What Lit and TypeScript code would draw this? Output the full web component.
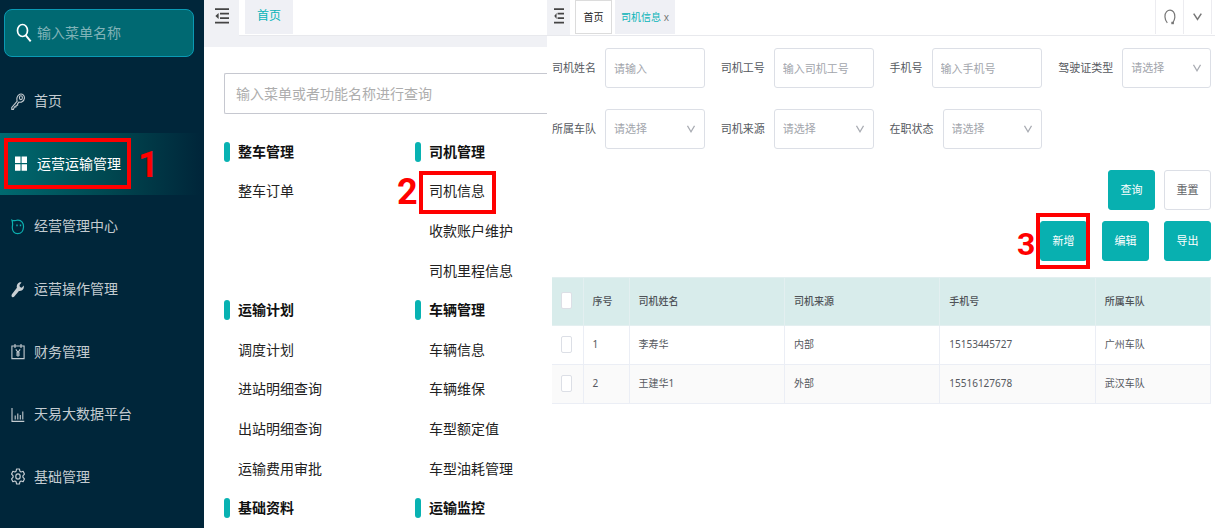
import { LitElement, html, css, svg, nothing } from "lit";
import { customElement } from "lit/decorators.js";
import { classMap } from "lit/directives/class-map.js";

const FONT = css`"Noto Sans", "Noto Sans CJK SC", sans-serif`;

const base = css`
  *, *::before, *::after { box-sizing: border-box; }
  button, input, select { font: inherit; margin: 0; }
  a { color: inherit; text-decoration: none; }
  ul { list-style: none; margin: 0; padding: 0; }
  svg { display: block; flex: none; }
  .marked { position: relative; }
  .mark {
    position: absolute;
    border: 4px solid #ff0000;
    pointer-events: none;
  }
  .step {
    position: absolute;
    color: #ff0000;
    font: 700 36px/36px Roboto, sans-serif;
    pointer-events: none;
  }
`;

const foldIcon = (w: number) => html`<svg width=${w} height="16" viewBox="0 0 14 16" preserveAspectRatio="none" aria-hidden="true">
  <path d="M0 1.2h14M5 5.7h9M5 10.2h9M0 14.7h14" stroke="#444" stroke-width="1.700" fill="none"/>
  <path d="M3.6 5v6L.4 8z" fill="#444"/>
</svg>`;

const chevron = html`<svg class="chevron" width="8" height="8" viewBox="0 0 8 8" aria-hidden="true">
  <path d="M.5 .8L4 6.8L7.5 .8" fill="none" stroke="#a8abb2" stroke-width="1.200"/>
</svg>`;

const icons: Record<string, unknown> = {
  key: svg`<g fill="none" stroke="#c3cbd0" stroke-width="1.1"><path d="M6.2 8.2C5.3 5.600 6.200 2.300 8.800 1.300C11.300 .400 13.800 2.500 13.400 5.400C13 8.100 10.400 9.900 7.900 9.100L6.600 10.800V12.300H5.200L4.900 13.900H3.500L2.400 16.400H.8V14.500Z"/><ellipse cx="9.900" cy="4.700" rx="1.500" ry="1.900"/></g>`,
  grid: svg`<path fill="#fff" d="M1 1.500h5.500v6.500H1zM7.600 1.500H13v6.500H7.600zM1 9.200h5.500v6.500H1zM7.600 9.200H13v6.500H7.600z"/>`,
  cat: svg`<path d="M1 2.200C2.700 3.200 4 2.500 6.500 2.200C10.600 1.900 12.800 5.200 12.500 9.200C12.200 13.300 9.700 15.600 6.600 15.600C3.200 15.600 1.200 13 1.300 9.500C1.400 7 2.200 5.800 1 2.200Z" fill="none" stroke="#0cb0b0" stroke-width="1.200"/><path d="M6 6.500v1.800M9.500 6.500v1.800" stroke="#0cb0b0" stroke-width="1.400"/>`,
  wrench: svg`<path fill="#c9d0d4" d="M12.700 4.600L10.700 6.700L8.900 5.900L8.500 3.900L10.500 1.400C7.600 .600 5.200 3.400 5.900 6.800L.9 13.200C.2 14.400.4 15.900 1.500 16.300C2.200 16.500 2.800 16.300 3.300 15.600L7.900 9.900C11.300 10.400 13.500 7.800 12.700 4.600Z"/>`,
  yen: svg`<g fill="none" stroke="#c3cbd0" stroke-width="1.100"><path d="M.9 3h12.200v12.600H.9zM4 1v4M10 1v4M4.800 6.300L7 9.300L9.200 6.300M7 9.300v4.400M5 10h4M5 12h4"/></g>`,
  chart: svg`<path d="M1 2v13.400h12.300M4.200 9.500v4M6.800 7.500v6M9.300 9v4.500M11.800 5.500v8" fill="none" stroke="#c3cbd0" stroke-width="1.100"/>`,
  gear: svg`<g fill="none" stroke="#c3cbd0" stroke-width="1.200" stroke-linejoin="round"><path d="M5.600 1h2.800l.5 2.200l1.200.8l2-.7l1.300 2.800l-1.500 1.700v1.400l1.500 1.700l-1.300 2.800l-2-.7l-1.200.8l-.5 2.200H5.600l-.5-2.200l-1.200-.8l-2 .7L.6 10.900l1.500-1.700V7.800L.6 6.100l1.300-2.800l2 .7l1.200-.8z"/><ellipse cx="7" cy="8.500" rx="2.200" ry="2.600"/></g>`,
};

interface NavEntry { icon: string; label: string; active?: boolean }

@customElement("side-nav")
class SideNav extends LitElement {
  static styles = [base, css`
    :host {
      display: flex;
      flex-direction: column;
      background: #00263a;
      color: #c3cbd0;
      padding: 9px 0 20px;
      font: 14px/20px ${FONT};
    }
    .search {
      display: flex;
      align-items: center;
      gap: 5px;
      height: 48px;
      margin: 0 10px 13px 4px;
      padding: 0 11px;
      background: #006972;
      border: 1px solid #0a9ab4;
      border-radius: 8px;
    }
    .search input {
      flex: 1;
      min-width: 0;
      border: 0;
      padding: 0;
      background: transparent;
      color: #fff;
      outline: 0;
    }
    .search input::placeholder { color: #80b3b8; opacity: 1; }
    nav { flex: 1; display: flex; }
    ul { flex: 1; display: flex; flex-direction: column; }
    li { flex: 1 0 0; display: flex; }
    .item { flex: 1; display: flex; align-items: center; gap: 9px; padding-left: 11px; }
    .item.active {
      color: #fff;
      padding-left: 14px;
      background: linear-gradient(90deg, #006a70 0%, #00464f 55%, #00263a 98%);
    }
    .mark { left: 4px; top: 5px; width: 127px; height: 51px; }
    .step { left: 138px; top: 14px; }
  `];

  private entries: NavEntry[] = [
    { icon: "key", label: "首页" },
    { icon: "grid", label: "运营运输管理", active: true },
    { icon: "cat", label: "经营管理中心" },
    { icon: "wrench", label: "运营操作管理" },
    { icon: "yen", label: "财务管理" },
    { icon: "chart", label: "天易大数据平台" },
    { icon: "gear", label: "基础管理" },
  ];

  render() {
    return html`
      <label class="search">
        <svg width="16" height="20" viewBox="0 0 16 20" aria-hidden="true">
          <ellipse cx="6.500" cy="7.500" rx="5" ry="6" fill="none" stroke="#fff" stroke-width="1.700"/>
          <path d="M9.800 12.300L14.700 18.300" stroke="#fff" stroke-width="1.900"/>
        </svg>
        <input type="text" placeholder="输入菜单名称" aria-label="输入菜单名称">
      </label>
      <nav><ul>
        ${this.entries.map((e) => html`<li class="marked">
          <a href="#" class=${classMap({ item: true, active: !!e.active })}>
            <svg width="14" height="17" viewBox="0 0 14 17" aria-hidden="true">${icons[e.icon]}</svg>
            <span>${e.label}</span>
          </a>
          ${e.active ? html`<span class="mark"></span><span class="step">1</span>` : nothing}
        </li>`)}
      </ul></nav>`;
  }
}

interface MenuGroup { title: string; links: string[]; rows: number }

@customElement("menu-panel")
class MenuPanel extends LitElement {
  static styles = [base, css`
    :host {
      display: flex;
      flex-direction: column;
      min-width: 0;
      background: #fff;
      color: #222;
      font: 14px/20px ${FONT};
    }
    .bar { display: flex; height: 47px; background: #f0f1f5; }
    .fold { width: 35px; height: 31px; border: 0; padding: 0; background: none; display: grid; place-items: center; }
    .tabs { flex: 1; height: 36px; padding-left: 6px; background: #fff; border-bottom: 1px solid #e8e9ed; }
    .tab {
      display: block;
      width: 48px;
      height: 34px;
      font-size: 12px;
      line-height: 32px;
      text-align: center;
      color: #08b4b8;
      background: #eff0f5;
    }
    .query {
      display: block;
      height: 41px;
      margin: 26px 0 18px 20px;
      padding: 0 11px;
      border: 1px solid #c6c8d0;
      border-right: 0;
      border-radius: 2px 0 0 2px;
      outline: 0;
    }
    .query::placeholder { color: #adadad; opacity: 1; }
    .columns { flex: 1; display: grid; grid-template-columns: 191px 1fr; padding-left: 20px; }
    .column, .group { display: flex; flex-direction: column; }
    .row { display: flex; align-items: center; margin: 0; font: inherit; padding-left: 14px; }
    .title { font-weight: 700; color: #111; padding: 0; gap: 8px; }
    .title::before { content: ""; width: 6px; height: 20px; border-radius: 3px; background: #08b2b2; }
    .mark { left: 4px; top: -1px; width: 77px; height: 43px; }
    .step { left: -18px; top: 2px; }
  `];

  private columns: MenuGroup[][] = [
    [
      { title: "整车管理", links: ["整车订单"], rows: 4 },
      { title: "运输计划", links: ["调度计划", "进站明细查询", "出站明细查询", "运输费用审批"], rows: 5 },
      { title: "基础资料", links: [], rows: 1 },
    ],
    [
      { title: "司机管理", links: ["司机信息", "收款账户维护", "司机里程信息"], rows: 4 },
      { title: "车辆管理", links: ["车辆信息", "车辆维保", "车型额定值", "车型油耗管理"], rows: 5 },
      { title: "运输监控", links: [], rows: 1 },
    ],
  ];

  private group(g: MenuGroup) {
    const share = `height:${100 / g.rows}%`;
    return html`<section class="group" style=${`height:${g.rows * 10}%`}>
      <h2 class="row title" style=${share}>${g.title}</h2>
      ${g.links.map((l) => html`<div class="row marked" style=${share}>
        <a href="#">${l}</a>
        ${l === "司机信息" ? html`<span class="mark"></span><span class="step">2</span>` : nothing}
      </div>`)}
    </section>`;
  }

  render() {
    return html`
      <header class="bar">
        <button class="fold" aria-label="折叠菜单">${foldIcon(14)}</button>
        <div class="tabs"><a class="tab" href="#">首页</a></div>
      </header>
      <input class="query" type="text" aria-label="菜单查询" placeholder="输入菜单或者功能名称进行查询">
      <div class="columns">
        ${this.columns.map((c) => html`<div class="column">${c.map((g) => this.group(g))}</div>`)}
      </div>`;
  }
}

interface Field { id: string; label: string; hint: string; select?: boolean }

@customElement("driver-page")
class DriverPage extends LitElement {
  static styles = [base, css`
    :host { display: block; min-width: 0; background: #fff; color: #55585e; font: 11px/16px ${FONT}; }
    .bar { display: flex; height: 36px; border-bottom: 1px solid #e8e9ed; }
    .fold { width: 23px; border: 0; padding: 0 0 4px; background: #f0f1f5; display: grid; place-items: center; }
    .tabs { flex: 1; display: flex; gap: 3px; padding-left: 5px; font-size: 10px; line-height: 32px; }
    .tab { height: 34px; text-align: center; width: 37px; color: #222; border: 1px solid #dcdcdc; }
    .tab.current { width: 60px; color: #08b4b8; background: #eff0f5; border-color: #eff0f5; }
    .close { color: #777; }
    .tool {
      width: 28px; height: 34px; padding: 0; border: 0; border-left: 1px solid #ececf0; background: none;
      display: grid; place-items: center;
    }
    .tool:last-child { width: 29px; margin-right: 3px; border-right: 1px solid #ececf0; }
    .body { padding: 12px 4px 0 5px; }
    .form { display: grid; grid-template-columns: repeat(4, 1fr); gap: 21px 16px; }
    .field { display: flex; align-items: center; gap: 9px; }
    .field label { flex: none; }
    .box { flex: 1; min-width: 0; display: grid; align-items: center; }
    .control {
      grid-area: 1 / 1;
      width: 100%;
      height: 40px;
      padding: 0 8px;
      border: 1px solid #dcdfe6;
      border-radius: 3px;
      background: #fff;
      color: #a2a5ac;
      appearance: none;
      outline: 0;
    }
    .control::placeholder { color: #a2a5ac; opacity: 1; }
    .chevron { grid-area: 1 / 1; justify-self: end; margin-right: 10px; pointer-events: none; }
    .actions { display: flex; justify-content: flex-end; gap: 9px; margin-top: 21px; }
    .actions.wide { gap: 15px; margin: 11px 0 16px; }
    .btn {
      width: 47px; height: 40px; padding: 0; display: block;
      color: #fff; background: #08b0b0; border: 1px solid #08b0b0; border-radius: 3px;
    }
    .btn.plain { color: #606266; background: #fff; border-color: #dcdfe6; }
    .mark { left: -4px; top: -8px; width: 54px; height: 56px; }
    .step { left: -23px; top: 5px; font-size: 32px; }
    table { width: 100%; border-collapse: collapse; table-layout: fixed; font-size: 10px; }
    th, td {
      height: 39px; padding: 0 0 2px 9px; text-align: left;
      border: 1px solid #ebeef5;
    }
    th { height: 48px; background: #d8eceb; font-weight: 500; color: #4f5358; border-color: #e3eff0; }
    td:first-child, th:first-child { border-left: 0; }
    tbody tr:nth-child(even) { background: #fafafa; }
    .pick { width: 31px; }
    .no { width: 46px; }
    .wide-col { width: 23.6%; }
    .check {
      display: block; width: 11px; height: 17px; appearance: none;
      background: #fff; border: 1px solid #dcdfe6; border-radius: 2px;
    }
  `];

  private fields: Field[] = [
    { id: "name", label: "司机姓名", hint: "请输入" },
    { id: "code", label: "司机工号", hint: "输入司机工号" },
    { id: "phone", label: "手机号", hint: "输入手机号" },
    { id: "licence", label: "驾驶证类型", hint: "请选择", select: true },
    { id: "fleet", label: "所属车队", hint: "请选择", select: true },
    { id: "source", label: "司机来源", hint: "请选择", select: true },
    { id: "status", label: "在职状态", hint: "请选择", select: true },
  ];

  private rows = [
    ["1", "李寿华", "内部", "15153445727", "广州车队"],
    ["2", "王建华1", "外部", "15516127678", "武汉车队"],
  ];

  private field(f: Field) {
    return html`<div class="field">
      <label for=${f.id}>${f.label}</label>
      <div class="box">
        ${f.select
          ? html`<select class="control" id=${f.id}><option>${f.hint}</option></select>${chevron}`
          : html`<input class="control" type="text" id=${f.id} placeholder=${f.hint}>`}
      </div>
    </div>`;
  }

  render() {
    return html`
      <header class="bar">
        <button class="fold" aria-label="折叠菜单">${foldIcon(10)}</button>
        <div class="tabs">
          <a class="tab" href="#">首页</a>
          <a class="tab current" href="#">司机信息 <span class="close">x</span></a>
        </div>
        <button class="tool" aria-label="刷新">
          <svg width="12" height="16" viewBox="0 0 12 16" aria-hidden="true">
            <path d="M3.300 13.800C.3 10.500.3 5 2.600 2.700C4.700.6 7.600.7 9.500 2.900C11.600 5.600 11.300 10.600 8.700 13.800" fill="none" stroke="#777" stroke-width="1.200"/>
            <path d="M7.300 12.800h2.600v2.400H7.300z" fill="#777"/>
          </svg>
        </button>
        <button class="tool" aria-label="更多">
          <svg width="9" height="8" viewBox="0 0 9 8" aria-hidden="true">
            <path d="M.7 .7L4.500 6.500L8.300 .7" fill="none" stroke="#777" stroke-width="1.500"/>
          </svg>
        </button>
      </header>
      <div class="body">
        <form class="form">${this.fields.map((f) => this.field(f))}</form>
        <div class="actions">
          <button class="btn">查询</button>
          <button class="btn plain">重置</button>
        </div>
        <div class="actions wide">
          <div class="marked">
            <button class="btn">新增</button>
            <span class="mark"></span><span class="step">3</span>
          </div>
          <button class="btn">编辑</button>
          <button class="btn">导出</button>
        </div>
        <table>
          <thead><tr>
            <th class="pick"><input class="check" type="checkbox" aria-label="全选"></th>
            <th class="no">序号</th>
            <th class="wide-col">司机姓名</th>
            <th class="wide-col">司机来源</th>
            <th class="wide-col">手机号</th>
            <th>所属车队</th>
          </tr></thead>
          <tbody>
            ${this.rows.map((r) => html`<tr>
              <td><input class="check" type="checkbox" aria-label=${r[1]}></td>
              ${r.map((c) => html`<td>${c}</td>`)}
            </tr>`)}
          </tbody>
        </table>
      </div>`;
  }
}

@customElement("app-root")
class AppRoot extends LitElement {
  static styles = css`
    :host {
      display: grid;
      grid-template-columns: 204px 343px minmax(0, 1fr);
      min-height: 100vh;
      background: #fff;
    }
  `;

  render() {
    return html`<side-nav></side-nav><menu-panel></menu-panel><driver-page></driver-page>`;
  }
}
